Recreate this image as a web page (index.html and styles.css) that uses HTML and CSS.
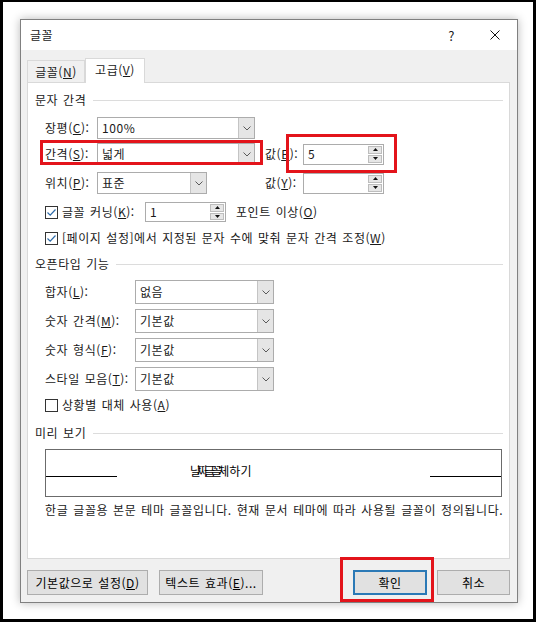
FILE: index.html
```html
<!DOCTYPE html>
<html lang="ko">
<head>
<meta charset="utf-8">
<title>글꼴</title>
<link rel="stylesheet" href="styles.css">
</head>
<body>
<div class="frame">
  <div class="dialog">
    <div class="titlebar">
      <span class="title">글꼴</span>
      <span class="help">?</span>
      <svg class="close" width="10" height="10" viewBox="0 0 10 10"><path d="M0.5 0.5 L9.5 9.5 M9.5 0.5 L0.5 9.5" stroke="#111" stroke-width="1"/></svg>
    </div>
    <div class="body">
      <div class="tabs">
        <div class="tab">글꼴(<u>N</u>)</div>
        <div class="tab active">고급(<u>V</u>)</div>
      </div>
      <div class="panel">
        <div class="ghead">문자 간격</div>

        <div class="row r1">
          <span class="lbl-a">장평(<u>C</u>):</span>
          <div class="combo w158"><span class="val">100%</span><span class="arrow"><svg width="8" height="5" viewBox="0 0 8 5"><path d="M0.5 0.5 L4 4 L7.5 0.5" fill="none" stroke="#5a5a5a"/></svg></span></div>
        </div>
        <div class="row r2">
          <span class="lbl-a">간격(<u>S</u>):</span>
          <div class="combo w158"><span class="val">넓게</span><span class="arrow"><svg width="8" height="5" viewBox="0 0 8 5"><path d="M0.5 0.5 L4 4 L7.5 0.5" fill="none" stroke="#5a5a5a"/></svg></span></div>
          <span class="lbl-b">값(<u>B</u>):</span>
          <div class="spin w81"><span class="val">5</span><span class="btns"><span><svg width="5" height="3" viewBox="0 0 5 3"><path d="M0 3 L2.5 0 L5 3Z" fill="#111"/></svg></span><span><svg width="5" height="3" viewBox="0 0 5 3"><path d="M0 0 L2.5 3 L5 0Z" fill="#111"/></svg></span></span></div>
        </div>
        <div class="row r3">
          <span class="lbl-a">위치(<u>P</u>):</span>
          <div class="combo w110"><span class="val">표준</span><span class="arrow"><svg width="8" height="5" viewBox="0 0 8 5"><path d="M0.5 0.5 L4 4 L7.5 0.5" fill="none" stroke="#5a5a5a"/></svg></span></div>
          <span class="lbl-b">값(<u>Y</u>):</span>
          <div class="spin w81"><span class="val"></span><span class="btns"><span><svg width="5" height="3" viewBox="0 0 5 3"><path d="M0 3 L2.5 0 L5 3Z" fill="#111"/></svg></span><span><svg width="5" height="3" viewBox="0 0 5 3"><path d="M0 0 L2.5 3 L5 0Z" fill="#111"/></svg></span></span></div>
        </div>

        <div class="row kern">
          <span class="cb"><svg width="11" height="11" viewBox="0 0 11 11"><path d="M1.5 5.5 L4.2 8.2 L9.5 2.5" fill="none" stroke="#2d6aa8" stroke-width="1.2"/></svg></span>
          <span class="lbl-k">글꼴 커닝(<u>K</u>):</span>
          <div class="spin w81"><span class="val">1</span><span class="btns"><span><svg width="5" height="3" viewBox="0 0 5 3"><path d="M0 3 L2.5 0 L5 3Z" fill="#111"/></svg></span><span><svg width="5" height="3" viewBox="0 0 5 3"><path d="M0 0 L2.5 3 L5 0Z" fill="#111"/></svg></span></span></div>
          <span class="after">포인트 이상(<u>O</u>)</span>
        </div>
        <div class="row page">
          <span class="cb"><svg width="11" height="11" viewBox="0 0 11 11"><path d="M1.5 5.5 L4.2 8.2 L9.5 2.5" fill="none" stroke="#2d6aa8" stroke-width="1.2"/></svg></span>
          <span>[페이지 설정]에서 지정된 문자 수에 맞춰 문자 간격 조정(<u>W</u>)</span>
        </div>

        <div class="ghead h2">오픈타입 기능</div>
        <div class="row ot first">
          <span class="lbl-o">합자(<u>L</u>):</span>
          <div class="combo w139"><span class="val">없음</span><span class="arrow"><svg width="8" height="5" viewBox="0 0 8 5"><path d="M0.5 0.5 L4 4 L7.5 0.5" fill="none" stroke="#5a5a5a"/></svg></span></div>
        </div>
        <div class="row ot">
          <span class="lbl-o">숫자 간격(<u>M</u>):</span>
          <div class="combo w139"><span class="val">기본값</span><span class="arrow"><svg width="8" height="5" viewBox="0 0 8 5"><path d="M0.5 0.5 L4 4 L7.5 0.5" fill="none" stroke="#5a5a5a"/></svg></span></div>
        </div>
        <div class="row ot">
          <span class="lbl-o">숫자 형식(<u>F</u>):</span>
          <div class="combo w139"><span class="val">기본값</span><span class="arrow"><svg width="8" height="5" viewBox="0 0 8 5"><path d="M0.5 0.5 L4 4 L7.5 0.5" fill="none" stroke="#5a5a5a"/></svg></span></div>
        </div>
        <div class="row ot">
          <span class="lbl-o">스타일 모음(<u>T</u>):</span>
          <div class="combo w139"><span class="val">기본값</span><span class="arrow"><svg width="8" height="5" viewBox="0 0 8 5"><path d="M0.5 0.5 L4 4 L7.5 0.5" fill="none" stroke="#5a5a5a"/></svg></span></div>
        </div>
        <div class="row ctx">
          <span class="cb"></span>
          <span>상황별 대체 사용(<u>A</u>)</span>
        </div>

        <div class="ghead h3">미리 보기</div>
        <div class="preview">
          <span class="pline"></span>
          <span class="ptext"><span class="ov">날짜글꼴체</span>하기</span>
          <span class="pline right"></span>
        </div>
        <p class="desc">한글 글꼴용 본문 테마 글꼴입니다. 현재 문서 테마에 따라 사용될 글꼴이 정의됩니다.</p>
      </div>
      <div class="buttons">
        <div class="btn b1">기본값으로 설정(<u>D</u>)</div>
        <div class="btn b2">텍스트 효과(<u>E</u>)...</div>
        <div class="btn ok">확인</div>
        <div class="btn cancel">취소</div>
      </div>
    </div>
  </div>
  <div class="mark m1"></div>
  <div class="mark m2"></div>
  <div class="mark m3"></div>
</div>
</body>
</html>
```
FILE: styles.css
```css
* { box-sizing: border-box; }
html, body { margin: 0; padding: 0; }
body {
  width: 536px;
  height: 622px;
  font-family: "Noto Sans CJK KR", "Noto Sans", sans-serif;
  font-size: 12px;
  letter-spacing: 0.55px;
  word-spacing: 1px;
  color: #1a1a1a;
  background: #fff;
}
u { text-decoration: underline; text-underline-offset: 1px; }

.frame {
  position: relative;
  width: 536px;
  height: 622px;
  border: solid #000;
  border-width: 2px 3px 3px 3px;
  padding: 17px 0 0 17px;
  background: #fff;
}

.dialog {
  width: 498px;
  height: 584px;
  border: 1px solid #808080;
  background: #f0f0f0;
  box-shadow: 0 0 9px rgba(0, 0, 0, 0.28);
  display: flex;
  flex-direction: column;
}

.titlebar {
  height: 30px;
  background: #fff;
  display: flex;
  align-items: center;
  padding: 0 17px 0 9px;
  line-height: 1;
}
.title { flex: 1; }
.help { margin-right: 35px; font-size: 13px; }

.body { flex: 1; padding: 8px 7px 0 6px; }

.tabs { display: flex; align-items: flex-end; height: 24px; }
.tab {
  width: 58px;
  height: 22px;
  border: 1px solid #d9d9d9;
  border-bottom: none;
  background: #f0f0f0;
  display: flex;
  align-items: center;
  justify-content: center;
  line-height: 1;
}
.tab.active {
  width: 60px;
  height: 25px;
  background: #fff;
  margin-bottom: -1px;
  position: relative;
  z-index: 1;
  padding-bottom: 2px;
}

.panel {
  height: 477px;
  background: #fff;
  border: 1px solid #d9d9d9;
  padding: 8px 6px 0 7px;
}

.ghead { display: flex; align-items: center; height: 18px; line-height: 18px; }
.ghead::after {
  content: "";
  flex: 1;
  border-top: 1px solid #dcdcdc;
  margin-left: 7px;
}
.ghead.h2 { margin-top: 8px; }
.ghead.h3 { margin-top: 10px; }

.row { display: flex; align-items: center; padding-left: 10px; line-height: 18px; }
.r1 { margin-top: 8px; height: 22px; }
.r2 { margin-top: 4px; height: 22px; }
.r3 { margin-top: 7px; height: 22px; }

.lbl-a { width: 52px; }
.lbl-b { width: 38px; margin-left: 10px; }
.lbl-k { width: 83px; }
.lbl-o { width: 90px; }

.combo {
  height: 22px;
  border: 1px solid #acacac;
  background: #fff;
  display: flex;
}
.combo .val { flex: 1; padding-left: 4px; display: flex; align-items: center; }
.combo .arrow {
  width: 16px;
  background: #e5e5e5;
  border-left: 1px solid #c4c4c4;
  display: flex;
  align-items: center;
  justify-content: center;
}
.w158 { width: 158px; }
.w110 { width: 110px; margin-right: 48px; }
.w139 { width: 139px; height: 24px; }

.spin {
  height: 21px;
  border: 1px solid #acacac;
  background: #fff;
  display: flex;
}
.w81 { width: 81px; }
.spin .val { flex: 1; padding-left: 4px; display: flex; align-items: center; }
.spin .btns {
  width: 15px;
  display: flex;
  flex-direction: column;
  padding: 1px 1px 1px 0;
  gap: 1px;
}
.spin .btns span {
  flex: 1;
  background: #e6e6e6;
  border: 1px solid #bdbdbd;
  display: flex;
  align-items: center;
  justify-content: center;
}

.cb {
  width: 13px;
  height: 13px;
  border: 1px solid #333;
  background: #fff;
  margin-right: 4px;
  display: flex;
  align-items: center;
  justify-content: center;
  flex: none;
}

.kern { margin-top: 8px; height: 20px; }
.kern .spin { height: 20px; }
.kern .after { margin-left: 10px; }
.page { margin-top: 7px; height: 18px; }

.ot { margin-top: 5px; height: 24px; }
.ot.first { margin-top: 7px; }
.ctx { margin-top: 5px; height: 18px; }

.preview {
  margin: 7px 0 0 10px;
  width: 457px;
  height: 48px;
  border: 1px solid #6b6b6b;
  display: flex;
  align-items: flex-start;
}
.pline { width: 71px; height: 1px; background: #000; margin-top: 26px; flex: none; }
.pline.right { margin-left: auto; }
.ptext { margin: 12px 0 0 73px; line-height: 18px; color: #000; letter-spacing: 0.3px; }
.ov { letter-spacing: -4px; margin-right: 4px; }

.desc {
  margin: 4px 0 0 10px;
  line-height: 18px;
  white-space: nowrap;
  letter-spacing: 0.6px;
}

.buttons { display: flex; margin-top: 11px; height: 25px; }
.btn {
  height: 25px;
  background: #e1e1e1;
  border: 1px solid #adadad;
  display: flex;
  align-items: center;
  justify-content: center;
  line-height: 1;
  color: #000;
}
.b1 { width: 121px; }
.b2 { width: 104px; margin-left: 11px; }
.ok { width: 74px; margin-left: auto; border: 2px solid #2b79b6; }
.cancel { width: 73px; margin-left: 10px; }

.mark {
  position: absolute;
  border: 3px solid #e3141b;
}
.m1 { left: 37px; top: 138px; width: 223px; height: 25px; }
.m2 { left: 283px; top: 132px; width: 111px; height: 39px; }
.m3 { left: 337px; top: 555px; width: 94px; height: 45px; }
```
